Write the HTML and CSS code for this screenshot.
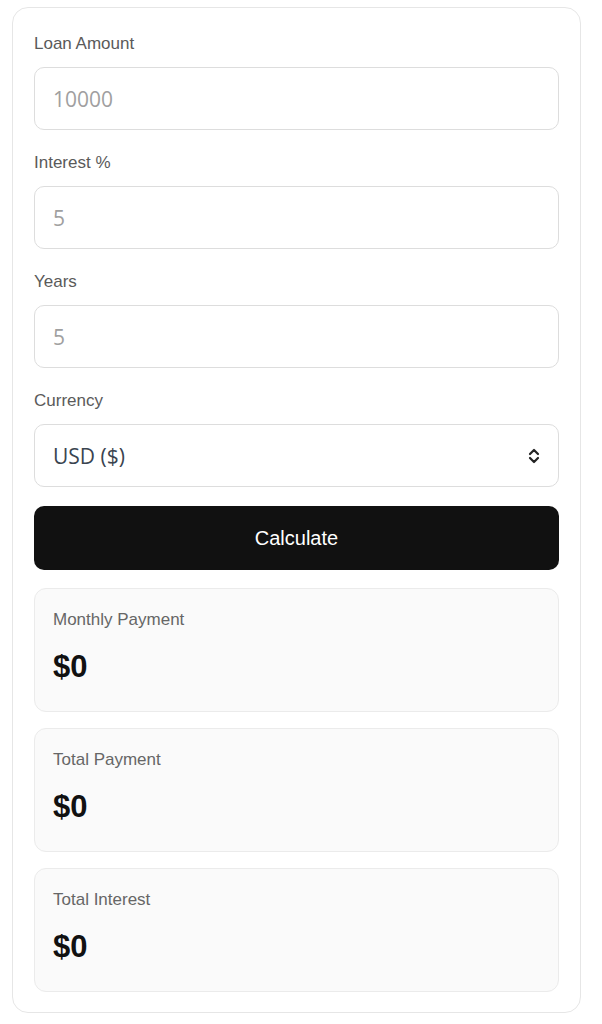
FILE: index.html
```html
<!DOCTYPE html>
<html lang="en">
<head>
  <meta charset="UTF-8" />
  <meta name="viewport" content="width=device-width, initial-scale=1.0"/>
  <title>Loan Calculator</title>
  <link rel="stylesheet" href="styles.css">
</head>
<body>

<div class="calc">
  <div class="field">
    <label for="amount">Loan Amount</label>
    <input id="amount" type="number" placeholder="10000">
  </div>
  <div class="field">
    <label for="rate">Interest %</label>
    <input id="rate" type="number" placeholder="5">
  </div>
  <div class="field">
    <label for="years">Years</label>
    <input id="years" type="number" placeholder="5">
  </div>
  <div class="field field-last">
    <label for="currency">Currency</label>
    <div class="select-wrap">
      <select id="currency">
        <option>USD ($)</option>
        <option>EUR (€)</option>
        <option>GBP (£)</option>
      </select>
      <svg class="chevron" width="12" height="18" viewBox="0 0 12 18" fill="none" stroke="#222" stroke-width="2.2" stroke-linecap="round" stroke-linejoin="round">
        <path d="M2 7 L6 3 L10 7"/>
        <path d="M2 11 L6 15 L10 11"/>
      </svg>
    </div>
  </div>

  <button class="calc-btn">Calculate</button>

  <div class="result">
    <div class="result-label">Monthly Payment</div>
    <div class="result-value" id="monthly">$0</div>
  </div>
  <div class="result">
    <div class="result-label">Total Payment</div>
    <div class="result-value" id="total">$0</div>
  </div>
  <div class="result">
    <div class="result-label">Total Interest</div>
    <div class="result-value" id="interest">$0</div>
  </div>
</div>

</body>
</html>
```

FILE: styles.css
```css
body {
  font-family: 'Liberation Sans', Arial, sans-serif;
  background: #fff;
  margin: 0;
  padding: 7px 21px 0 12px;
}
.calc {
  border: 1px solid #e6e6e6;
  border-radius: 16px;
  padding: 24px 21px 20px 21px;
  display: flex;
  flex-direction: column;
}
.field {
  display: flex;
  flex-direction: column;
  margin-bottom: 21px;
}
.field-last {
  margin-bottom: 19px;
}
label {
  font-size: 17px;
  line-height: 24px;
  color: #5a5a5a;
  margin-bottom: 11px;
}
input, select {
  font-family: 'Open Sans', sans-serif;
  font-size: 21px;
  height: 63px;
  box-sizing: border-box;
  border: 1px solid #ddd;
  border-radius: 10px;
  padding: 0 18px;
  background: #fff;
  color: #3a4450;
  width: 100%;
  outline: none;
}
input::placeholder {
  color: #a0a0a0;
}
.select-wrap {
  position: relative;
}
select {
  appearance: none;
  -webkit-appearance: none;
}
.chevron {
  position: absolute;
  right: 19px;
  top: 23px;
  pointer-events: none;
}
.calc-btn {
  height: 64px;
  background: #111;
  color: #fff;
  border: none;
  border-radius: 10px;
  font-family: 'Liberation Sans', Arial, sans-serif;
  font-size: 20px;
  cursor: pointer;
  margin-bottom: 18px;
}
.result {
  background: #fafafa;
  border: 1px solid #ebebeb;
  border-radius: 12px;
  height: 124px;
  box-sizing: border-box;
  padding: 19px 18px;
  margin-bottom: 16px;
}
.result:last-child {
  margin-bottom: 0;
}
.result-label {
  font-size: 17px;
  line-height: 24px;
  color: #666;
  margin-bottom: 15px;
}
.result-value {
  font-size: 31px;
  line-height: 40px;
  font-weight: bold;
  color: #111;
}
```
